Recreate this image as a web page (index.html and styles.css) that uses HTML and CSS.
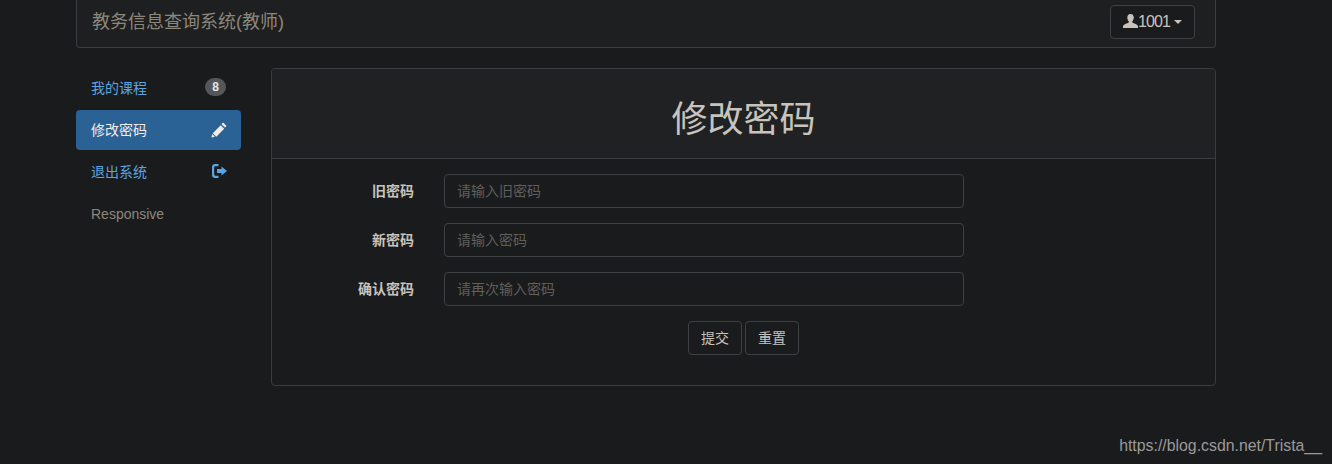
FILE: index.html
```html
<!DOCTYPE html>
<html lang="zh-CN">
<head>
    <meta charset="UTF-8">
    <title>修改密码</title>
    <link rel="stylesheet" href="styles.css">
</head>
<body>
    <div class="wrapper">
        <nav class="navbar">
            <span class="brand">教务信息查询系统(教师)</span>
            <button type="button" class="user-btn">
                <svg class="user-icon" viewBox="0 0 15 14" width="15" height="14"><path fill="currentColor" d="M7.500 0C9.600 0 10.800 1.500 10.800 3.600c0 1.600-.7 3.200-1.600 4 0 .7.2 1.100.9 1.400 1.900.8 4.400 1.500 4.900 3V14H0v-2c.5-1.500 3-2.200 5-3 .7-.3.900-.7.900-1.400-.9-.8-1.600-2.400-1.600-4C4.300 1.500 5.400 0 7.500 0z"/></svg><span class="user-id">1001</span><span class="caret"></span>
            </button>
        </nav>

        <div class="content">
            <ul class="side-nav">
                <li><a href="#" class="side-link">我的课程<span class="badge">8</span></a></li>
                <li><a href="#" class="side-link active">修改密码
                    <svg viewBox="0 0 16 16" width="16" height="16"><path fill="currentColor" d="M12.600.9l2.500 2.500c.3.300.3.700 0 1l-1.200 1.200-3.500-3.500L11.600.9c.3-.3.700-.3 1 0zM9.700 3.300l3.500 3.500-7.900 7.900-3.500-3.500zM1.300 12l2.700 2.700-3.600.9z"/></svg>
                </a></li>
                <li><a href="#" class="side-link">退出系统
                    <svg class="exit-icon" viewBox="0 0 15 14" width="15" height="14"><path fill="currentColor" d="M6.500 0v2.200H3.400c-.7 0-1.200.5-1.200 1.200v7.200c0 .7.500 1.200 1.200 1.200h3.100V14H3C1.300 14 0 12.700 0 11V3C0 1.300 1.300 0 3 0zM9.500 2.500L15 7l-5.500 4.500V9H5V5h4.500z"/></svg>
                </a></li>
                <li><a href="#" class="side-link muted">Responsive</a></li>
            </ul>

            <section class="panel">
                <h2 class="panel-title">修改密码</h2>
                <form class="panel-body">
                    <div class="form-row">
                        <label for="oldPwd">旧密码</label>
                        <input type="password" id="oldPwd" placeholder="请输入旧密码">
                    </div>
                    <div class="form-row">
                        <label for="newPwd">新密码</label>
                        <input type="password" id="newPwd" placeholder="请输入密码">
                    </div>
                    <div class="form-row">
                        <label for="confirmPwd">确认密码</label>
                        <input type="password" id="confirmPwd" placeholder="请再次输入密码">
                    </div>
                    <div class="form-actions">
                        <button type="submit" class="btn">提交</button>
                        <button type="reset" class="btn">重置</button>
                    </div>
                </form>
            </section>
        </div>
    </div>

    <div class="watermark">https://blog.csdn.net/Trista__</div>
</body>
</html>
```
FILE: styles.css
```css
/* General Styling */
html, body {
    height: 100%;
}

body {
    position: relative;
    margin: 0;
    overflow: hidden;
    background-color: #1a1b1d;
    color: #c8c3bc;
    font-family: "Liberation Sans", "Noto Sans CJK SC", sans-serif;
    font-size: 14px;
    line-height: 20px;
}

.wrapper {
    width: 1140px;
    margin-left: 76px;
}

/* Top bar */
.navbar {
    display: flex;
    justify-content: space-between;
    align-items: flex-start;
    box-sizing: border-box;
    height: 48px;
    padding: 5px 20px 0 15px;
    background: #1d1f21;
    border: 1px solid #3a3d3f;
    border-top: 0;
    border-radius: 0 0 4px 4px;
}

.brand {
    color: #8d877b;
    font-size: 18px;
    line-height: 34px;
}

.user-btn {
    display: flex;
    align-items: center;
    box-sizing: border-box;
    width: 85px;
    height: 34px;
    padding: 0 0 0 12px;
    background: #1a1b1d;
    border: 1px solid #3e4144;
    border-radius: 4px;
    color: #c8c3bc;
    font: inherit;
}

.user-icon {
    margin-top: -3px;
}

.user-id {
    font-size: 16px;
    letter-spacing: -0.9px;
}

.caret {
    width: 0;
    height: 0;
    margin-left: 4px;
    border-top: 4px solid #c8c3bc;
    border-left: 4px solid transparent;
    border-right: 4px solid transparent;
}

.content {
    display: flex;
    gap: 30px;
    margin-top: 20px;
}

/* Sidebar */
.side-nav {
    flex: 0 0 165px;
    display: flex;
    flex-direction: column;
    gap: 2px;
    margin: 0;
    padding: 0;
    list-style: none;
}

.side-link {
    display: flex;
    justify-content: space-between;
    align-items: center;
    height: 40px;
    box-sizing: border-box;
    padding: 0 14px 0 15px;
    border-radius: 4px;
    color: #5aa5e0;
    font-size: 14px;
    text-decoration: none;
}

.side-link.active {
    background: #2a6296;
    color: #f0eeea;
}

.side-link.muted {
    color: #8d877b;
}

.exit-icon {
    margin-top: -3px;
}

.badge {
    box-sizing: border-box;
    width: 21px;
    height: 18px;
    margin: -2px 1px 0 0;
    border-radius: 9px;
    background: #53575a;
    color: #e8e6e3;
    font-size: 12px;
    font-weight: bold;
    line-height: 18px;
    text-align: center;
}

/* Main panel */
.panel {
    flex: 0 0 945px;
    box-sizing: border-box;
    height: 318px;
    border: 1px solid #3a3d3f;
    border-radius: 4px;
}

.panel-title {
    height: 89px;
    margin: 0;
    background: #1f2123;
    border-bottom: 1px solid #3a3d3f;
    border-radius: 4px 4px 0 0;
    font-size: 36px;
    font-weight: normal;
    line-height: 101px;
    text-align: center;
}

.panel-body {
    display: flex;
    flex-direction: column;
    gap: 15px;
    padding-top: 15px;
}

.form-row {
    display: flex;
    align-items: center;
}

.form-row label {
    width: 142px;
    margin-right: 30px;
    font-weight: bold;
    text-align: right;
}

.form-row input {
    box-sizing: border-box;
    width: 520px;
    height: 34px;
    padding: 6px 12px;
    background: #1a1b1d;
    border: 1px solid #3e4144;
    border-radius: 4px;
    color: #c8c3bc;
    font: inherit;
}

.form-row input::placeholder {
    color: #5f5f5c;
    opacity: 1;
}

.form-actions {
    display: flex;
    justify-content: center;
    gap: 3px;
}

.btn {
    box-sizing: border-box;
    width: 54px;
    height: 34px;
    padding: 0;
    background: #1a1b1d;
    border: 1px solid #3e4144;
    border-radius: 4px;
    color: #c8c3bc;
    font: inherit;
}

.watermark {
    position: absolute;
    right: 10px;
    bottom: 8px;
    color: #9a9a9a;
    font-size: 15.85px;
}
```
